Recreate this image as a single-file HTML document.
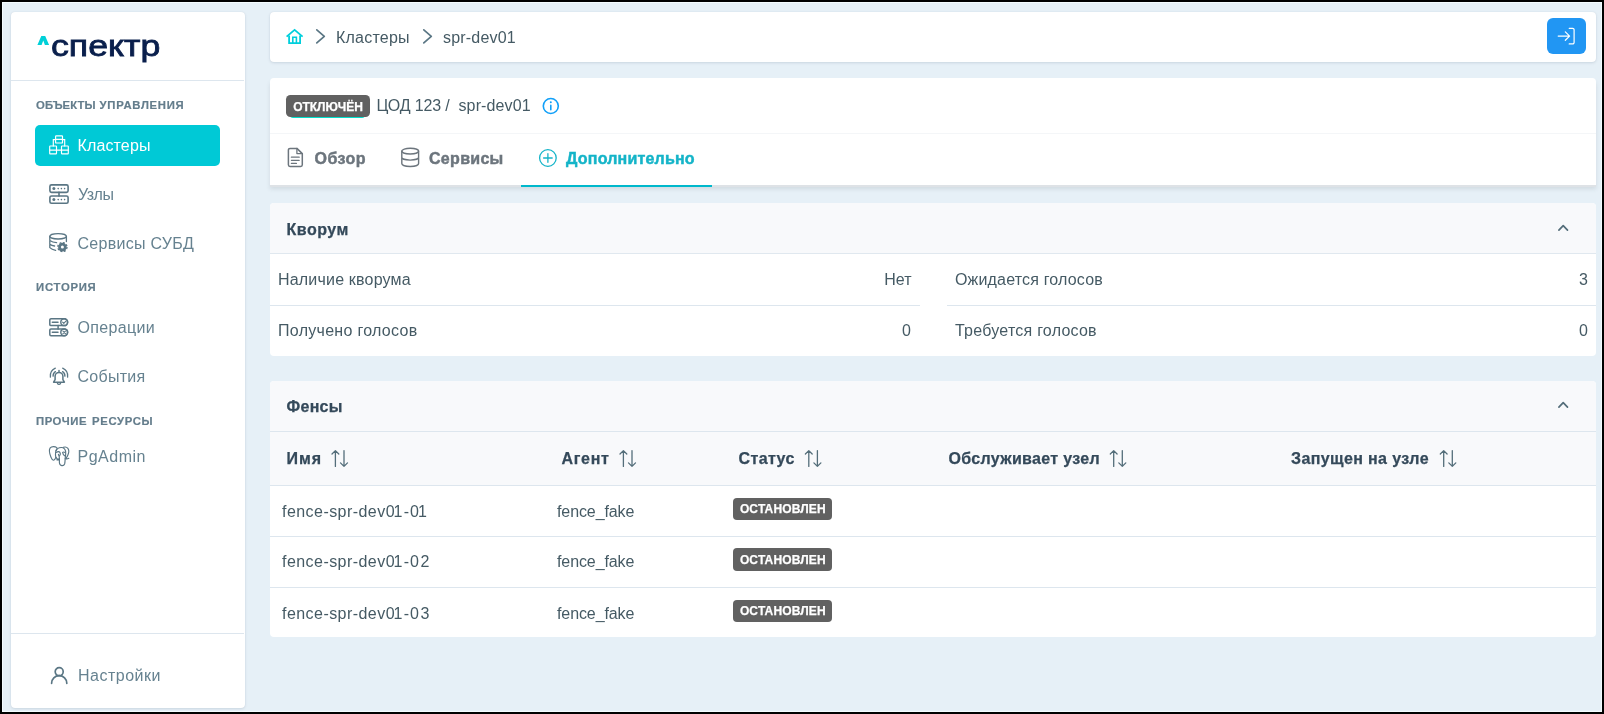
<!DOCTYPE html>
<html lang="ru">
<head>
<meta charset="utf-8">
<title>Спектр — Кластеры — spr-dev01</title>
<style>
*{box-sizing:border-box;margin:0;padding:0}
html,body{width:1604px;height:714px;overflow:hidden;background:#000}
body{font-family:"Liberation Sans",sans-serif;font-size:16px;color:#455a64;position:relative}
.frame{position:absolute;left:2px;top:2px;width:1600px;height:710px;background:#e6f0f7;border:1px solid #f4fcff;overflow:hidden}
#app{position:absolute;left:0;top:0;width:1604px;height:714px;will-change:transform}
.abs{position:absolute;white-space:nowrap;line-height:1}
.card{position:absolute;background:#fff;border-radius:4px;box-shadow:0 1px 3px rgba(70,90,110,.16),0 0 1px rgba(70,90,110,.12)}
.panel{position:absolute;background:#fff;border-radius:4px;overflow:hidden}
.hr{position:absolute;height:1px;background:#dde6ee}
.lbl{font-size:11.3px;font-weight:bold;color:#647d8c;-webkit-text-stroke:.2px #647d8c}
.nav{color:#668290;font-size:16px}
.active{position:absolute;left:35px;top:125px;width:185px;height:41px;border-radius:5px;background:#00c9d6}
svg{position:absolute;overflow:visible}
.ic{fill:none;stroke:#5a7684;stroke-width:1.5;stroke-linecap:round;stroke-linejoin:round}
.t{color:#455a64}
.b{font-weight:bold;color:#34495a;-webkit-text-stroke:.25px currentColor}
.tab{font-weight:bold;color:#6c757d;-webkit-text-stroke:.45px currentColor}
.phead{position:absolute;left:0;top:0;right:0;background:#f8f9fb}
.badge{position:absolute;letter-spacing:.2px;-webkit-text-stroke:.25px #fff;background:#616161;color:#fff;font-weight:bold;font-size:12px;border-radius:4px;text-align:center;white-space:nowrap}
</style>
</head>
<body>
<div id="app">
<div class="frame"></div>

<!-- SIDEBAR -->
<div class="card" style="left:10.8px;top:11.6px;width:233.8px;height:696px"></div>
<div class="abs" id="logo" style="left:50.7px;top:30.6px;font-size:30px;color:#0a1f4c;letter-spacing:0;-webkit-text-stroke:0.8px #0a1f4c;transform:scaleX(1.19);transform-origin:0 0">спектр</div>
<svg style="left:0;top:0" width="60" height="60" viewBox="0 0 60 60"><path d="M37.4 45L41.3 36H45.2L49.1 45H44.9L43.25 40.4L41.6 45Z" fill="#00d0d8"/></svg>
<div class="hr" style="left:11px;top:80px;width:233.3px"></div>

<div class="abs lbl" style="left:36px;top:100px;letter-spacing:.1px">ОБЪЕКТЫ</div>
<div class="abs lbl" style="left:99.6px;top:100px;letter-spacing:.72px">УПРАВЛЕНИЯ</div>
<div class="active"></div>
<div class="abs nav" style="left:77.5px;top:138px;color:#fff;letter-spacing:0.13px">Кластеры</div>
<div class="abs nav" style="left:78px;top:187px;letter-spacing:-0.4px">Узлы</div>
<div class="abs nav" style="left:77.5px;top:236px;letter-spacing:0.29px">Сервисы СУБД</div>
<div class="abs lbl" style="left:36px;top:282px;letter-spacing:.76px">ИСТОРИЯ</div>
<div class="abs nav" style="left:77.5px;top:320px;letter-spacing:0.35px">Операции</div>
<div class="abs nav" style="left:77.5px;top:369px;letter-spacing:0.28px">События</div>
<div class="abs lbl" style="left:36px;top:416px;letter-spacing:.52px">ПРОЧИЕ</div>
<div class="abs lbl" style="left:92px;top:416px;letter-spacing:.66px">РЕСУРСЫ</div>
<div class="abs nav" style="left:77.5px;top:449px;letter-spacing:0.5px">PgAdmin</div>
<div class="hr" style="left:11px;top:633px;width:233.3px"></div>
<div class="abs nav" style="left:78px;top:668px;letter-spacing:0.5px">Настройки</div>

<!-- sidebar icons -->
<svg style="left:49px;top:135.2px" width="20" height="20" viewBox="0 0 20 20" class="ic"><g stroke="#fff" stroke-width="1.15" stroke-linejoin="miter">
<rect x="6.6" y="0.9" width="6.9" height="7.1" rx=".6"/><path d="M6.6 4.4H13.5M6.6 4.6H4.3V11M13.5 4.6H15.7V11"/>
<rect x="0.7" y="11" width="6.8" height="7.9" rx=".6"/><rect x="12.5" y="11" width="6.8" height="7.9" rx=".6"/><path d="M0.7 15.1H19.3"/></g></svg>

<svg style="left:49px;top:184px" width="20" height="20" viewBox="0 0 20 20" class="ic"><g stroke-width="1.6">
<rect x="0.9" y="0.9" width="18.2" height="7.5" rx="1.6"/><rect x="0.9" y="12" width="18.2" height="7.3" rx="1.6"/><path d="M10 8.4V12"/></g>
<g fill="#5a7684" stroke="none"><circle cx="4.9" cy="4.6" r="1.5"/><circle cx="9.2" cy="4.6" r=".8"/><circle cx="12.4" cy="4.6" r=".8"/><circle cx="15.6" cy="4.6" r=".8"/>
<circle cx="4.9" cy="15.6" r="1.5"/><circle cx="9.2" cy="15.6" r=".8"/><circle cx="12.4" cy="15.6" r=".8"/><circle cx="15.6" cy="15.6" r=".8"/></g></svg>

<svg style="left:49px;top:233px" width="20" height="20" viewBox="0 0 20 20" class="ic"><g stroke-width="1.3">
<ellipse cx="9.1" cy="3.3" rx="8.3" ry="2.7"/><path d="M0.8 3.3V14.6M17.4 3.3V8.6M0.8 7.6Q3.5 9.6 7.6 9.7M0.8 11.2Q2.6 12.7 5.6 13M0.8 14.6Q2.8 16.6 6.6 17.3"/></g>
<circle cx="13.4" cy="14.1" r="4.3" fill="#5a7684" stroke="none"/><circle cx="13.4" cy="14.1" r="4.6" stroke-width="1.3" stroke-dasharray="1.9 1.713" stroke-linecap="butt"/><circle cx="13.4" cy="14.1" r="1.5" fill="#fff" stroke="none"/></svg>

<svg style="left:49px;top:318px" width="20" height="20" viewBox="0 0 20 20" class="ic"><g stroke-width="1.5">
<path d="M2 0.8H15.2a3.4 3.4 0 0 1 0 6.8H2A1.2 1.2 0 0 1 .8 6.4V2A1.2 1.2 0 0 1 2 .8Z"/><circle cx="15.2" cy="4.2" r="3.4"/><path d="M3.3 4.2H9"/>
<path d="M2 10.9H15.2a3.4 3.4 0 0 1 0 6.8H2a1.2 1.2 0 0 1-1.2-1.2V12.1a1.2 1.2 0 0 1 1.2-1.2Z"/><circle cx="15.2" cy="14.3" r="3.4"/><path d="M3.3 14.3H9M9.1 7.6V10.9"/></g>
<g stroke-width="1.1"><path d="M13.6 4.1L14.8 5.3L16.9 3.2M14 13.1L16.4 15.5M16.4 13.1L14 15.5"/></g></svg>

<svg style="left:49px;top:367px" width="20" height="20" viewBox="0 0 20 20" class="ic"><g stroke-width="1.5">
<path d="M10 3.4V4.8M4.6 15.2L6.1 12.6V9.3a3.9 3.9 0 0 1 7.8 0V12.6L15.4 15.2Z"/><path d="M8.4 16.2a1.7 1.7 0 0 0 3.2 0" stroke-width="1.2"/>
<path d="M6.4 4.6Q3.9 6.2 4.1 9.2M13.6 4.6Q16.1 6.2 15.9 9.2M6.3 1.2Q.6 3.8 1.4 10.2M13.7 1.2Q19.4 3.8 18.6 10.2" stroke-width="1.3"/></g></svg>

<svg style="left:49px;top:446px" width="20" height="20" viewBox="0 0 20 20" class="ic"><g stroke-width="1.15">
<path d="M7.9 1.6C6 .3 2.6.2 1.2 1.9C-.2 3.8.9 8.6 2 11.2C2.7 12.9 3.6 14.3 4.5 14.2C5.6 14 6.4 12.6 6.8 11.3C6.3 8.6 6.4 5 7.9 2.6"/>
<path d="M7 4.8C8 2.4 10.3 1.4 12.6 1.5C14.6 1.6 16.1 2.9 16.6 5.2C17 7.4 16.6 10 16.2 12.3C16 14.6 16.1 16.6 15.6 18C15.1 19.3 13.9 19.8 12.7 19.6C11.2 19.4 10.5 18.2 10.4 16.8V12.6C10.4 11 10.2 9.6 9.4 8.4"/>
<path d="M14.4 1.3C16 .8 17.9 1.1 18.9 2.4C20.1 4 19.9 6.6 19 8.8C18.6 10 18 11.1 17.3 11.9M16.2 12.7C17.4 13.1 18.8 12.9 19.8 12.3"/>
<path d="M7.6 6.4C8.6 5.4 10.2 5.4 10.9 6.3C11.6 7.3 11.4 8.8 10.6 9.8M13.6 6.4C14.2 5.8 15.2 5.8 15.8 6.4M13.7 6.6C13.9 8 14.6 9.2 15.7 9.8M7.2 11.4C7.4 12.4 8.4 13.4 10.2 13.4"/></g>
<path d="M7.4 13.2L10 12.4L10.2 14.4L7.6 14.6Z" fill="#5a7684" stroke="none"/></svg>

<svg style="left:49px;top:665px" width="20" height="20" viewBox="0 0 20 20" class="ic"><g stroke-width="1.7"><circle cx="10.2" cy="6.7" r="4"/><path d="M2.6 18.3a7.6 7.6 0 0 1 15.2 0"/></g></svg>

<!-- TOP BAR -->
<div class="card" style="left:270px;top:11.5px;width:1326px;height:50px"></div>
<svg style="left:286px;top:28px" width="18" height="17" viewBox="0 0 18 17" fill="none" stroke="#00cfdc" stroke-width="1.8" stroke-linejoin="miter" stroke-linecap="butt"><path d="M0.6 8.6L8.6 1.9L16.6 8.6"/><path d="M3.1 7.6V15.1H14.1V7.6"/><path d="M6.8 15.1V9.3H10.4V15.1" stroke-width="1.6"/></svg>
<svg style="left:315px;top:28px" width="12" height="17" viewBox="0 0 12 17" class="ic"><path d="M1.8 1.9L9.3 8.4L1.8 14.9" stroke-width="1.7"/></svg>
<div class="abs t" style="left:336px;top:30px;letter-spacing:0.22px">Кластеры</div>
<svg style="left:421.8px;top:28px" width="12" height="17" viewBox="0 0 12 17" class="ic"><path d="M1.8 1.9L9.3 8.4L1.8 14.9" stroke-width="1.7"/></svg>
<div class="abs t" style="left:443px;top:30px;letter-spacing:0.2px">spr-dev01</div>
<div style="position:absolute;left:1546.5px;top:18px;width:39.5px;height:36px;border-radius:6px;background:#2196f3"></div>
<svg style="left:1556px;top:26px" width="20" height="20" viewBox="0 0 20 20" fill="none" stroke="#fff" stroke-width="1.2" stroke-linecap="round" stroke-linejoin="round"><path d="M2.2 10.1H13.4M9.3 5.9L13.6 10.1L9.3 14.3M13.2 2.3H16.6a1.5 1.5 0 0 1 1.5 1.5V16.4a1.5 1.5 0 0 1-1.5 1.5H13.2"/></svg>

<!-- HEADER CARD -->
<div class="card" style="left:270px;top:78px;width:1326px;height:107px;border-radius:4px 4px 0 0;box-shadow:0 4px 4px rgba(60,70,80,.13)"></div>
<div class="hr" style="left:270px;top:185px;width:1326px;height:2px;background:#dee2e6"></div>
<div class="hr" style="left:270px;top:133px;width:1326px;background:#f4f6f8"></div>
<div style="position:absolute;left:290px;top:115px;width:75px;height:3px;border-radius:0 0 3px 3px;background:#00e0cc"></div>
<div class="badge" style="left:286px;top:95px;width:84px;height:22.3px;line-height:24px;border-radius:4.5px;letter-spacing:0">ОТКЛЮЧЁН</div>
<div class="abs t" style="left:376.5px;top:98px;letter-spacing:-0.17px">ЦОД 123 /</div>
<div class="abs t" style="left:458.5px;top:98px;letter-spacing:0.12px">spr-dev01</div>
<svg style="left:541px;top:96px" width="20" height="20" viewBox="0 0 20 20" fill="none" stroke="#12a0f8" stroke-width="1.6" stroke-linecap="round"><circle cx="9.8" cy="10" r="7.5"/><path d="M9.8 9.4V13.7" stroke-width="1.6"/><circle cx="9.8" cy="6.3" r="1" fill="#12a0f8" stroke="none"/></svg>

<svg style="left:287px;top:147px" width="17" height="21" viewBox="0 0 17 21" fill="none" stroke="#6c757d" stroke-width="1.5" stroke-linecap="round" stroke-linejoin="round"><path d="M3 1.4H9.9L15.3 6.6V17.8A1.6 1.6 0 0 1 13.7 19.4H3A1.6 1.6 0 0 1 1.4 17.8V3A1.6 1.6 0 0 1 3 1.4Z"/><path d="M9.9 1.4V6.6H15.3M4.4 10.2H12.2M4.4 13.3H12.2M4.4 16.4H9.4" stroke-width="1.3"/></svg>
<div class="abs tab" style="left:314.5px;top:151px;letter-spacing:0.45px">Обзор</div>
<svg style="left:400px;top:147.1px" width="20" height="21" viewBox="0 0 20 21" fill="none" stroke="#6c757d" stroke-width="1.4" stroke-linecap="round"><ellipse cx="10.2" cy="4.1" rx="8.4" ry="2.9"/><path d="M1.8 4.1V16.6C1.8 18.2 5.6 19.5 10.2 19.5S18.6 18.2 18.6 16.6V4.1M1.8 10.2C1.8 11.8 5.6 13.1 10.2 13.1S18.6 11.8 18.6 10.2"/></svg>
<div class="abs tab" style="left:429px;top:151px;letter-spacing:0.3px">Сервисы</div>
<svg style="left:538px;top:148px" width="20" height="20" viewBox="0 0 20 20" fill="none" stroke="#14b4c8" stroke-width="1.3" stroke-linecap="round"><circle cx="9.9" cy="10" r="8.3"/><path d="M5.6 10H14.2M9.9 5.7V14.3"/></svg>
<div class="abs tab" style="left:566px;top:151px;color:#14b4c8;letter-spacing:0.2px">Дополнительно</div>
<div style="position:absolute;left:521px;top:185px;width:191.3px;height:2px;background:#00b8cc"></div>

<!-- QUORUM -->
<div class="panel" style="left:270px;top:203.2px;width:1326px;height:152.8px">
  <div class="phead" style="height:50px"></div>
  <div class="hr" style="left:0;top:49.7px;width:1326px;height:1.6px;background:#e0e8ef"></div>
</div>
<div class="abs b" style="left:286.5px;top:222px;letter-spacing:0.5px">Кворум</div>
<svg style="left:1556px;top:222px" width="14" height="11" viewBox="0 0 14 11" class="ic"><path d="M2.9 8.1L7.2 3.6L11.5 8.1" stroke-width="1.7" stroke="#546e7a"/></svg>
<div class="abs t" style="left:278px;top:272px;letter-spacing:0.19px">Наличие кворума</div>
<div class="abs t" style="right:692.5px;top:272px">Нет</div>
<div class="abs t" style="left:278px;top:323px;letter-spacing:0.29px">Получено голосов</div>
<div class="abs t" style="right:693px;top:323px">0</div>
<div class="hr" style="left:270px;top:305px;width:650px"></div>
<div class="abs t" style="left:955px;top:272px;letter-spacing:0.175px">Ожидается голосов</div>
<div class="abs t" style="right:16px;top:272px">3</div>
<div class="abs t" style="left:955px;top:323px;letter-spacing:0.24px">Требуется голосов</div>
<div class="abs t" style="right:16px;top:323px">0</div>
<div class="hr" style="left:947px;top:305px;width:649px"></div>

<!-- FENCES -->
<div class="panel" style="left:270px;top:381px;width:1326px;height:256.4px">
  <div class="phead" style="height:105px"></div>
  <div class="hr" style="left:0;top:50px;width:1326px"></div>
  <div class="hr" style="left:0;top:104px;width:1326px"></div>
  <div class="hr" style="left:0;top:155px;width:1326px"></div>
  <div class="hr" style="left:0;top:206px;width:1326px"></div>
</div>
<div class="abs b" style="left:286.5px;top:399px;letter-spacing:0.3px">Фенсы</div>
<svg style="left:1556px;top:399.4px" width="14" height="11" viewBox="0 0 14 11" class="ic"><path d="M2.9 8.1L7.2 3.6L11.5 8.1" stroke-width="1.7" stroke="#546e7a"/></svg>
<div class="abs b" style="left:286.5px;top:451px;letter-spacing:1.0px">Имя</div>
<div class="abs b" style="left:561.5px;top:451px;letter-spacing:0.67px">Агент</div>
<div class="abs b" style="left:738.5px;top:451px;letter-spacing:0.38px">Статус</div>
<div class="abs b" style="left:948.5px;top:451px;letter-spacing:0.33px">Обслуживает узел</div>
<div class="abs b" style="left:1291px;top:451px;letter-spacing:0.38px">Запущен на узле</div>
<svg style="left:0;top:0" width="1604" height="714" viewBox="0 0 1604 714" fill="none" stroke="#546e7a" stroke-width="1.3" stroke-linecap="round" stroke-linejoin="round">
<path transform="translate(331.3 449.8)" d="M4.1 16.6V0.9M0.7 4.2L4.1 0.8L7.5 4.2M12.7 0.8V16.5M9.2 13.1L12.7 16.6L16.2 13.1"/><path transform="translate(619.3 449.8)" d="M4.1 16.6V0.9M0.7 4.2L4.1 0.8L7.5 4.2M12.7 0.8V16.5M9.2 13.1L12.7 16.6L16.2 13.1"/><path transform="translate(804.7 449.8)" d="M4.1 16.6V0.9M0.7 4.2L4.1 0.8L7.5 4.2M12.7 0.8V16.5M9.2 13.1L12.7 16.6L16.2 13.1"/><path transform="translate(1109.6 449.8)" d="M4.1 16.6V0.9M0.7 4.2L4.1 0.8L7.5 4.2M12.7 0.8V16.5M9.2 13.1L12.7 16.6L16.2 13.1"/><path transform="translate(1439.6 449.8)" d="M4.1 16.6V0.9M0.7 4.2L4.1 0.8L7.5 4.2M12.7 0.8V16.5M9.2 13.1L12.7 16.6L16.2 13.1"/>
</svg>

<div class="abs t" style="left:282px;top:504px"><span style="letter-spacing:.45px">fence-spr-dev0</span><span style="margin-left:-1.5px;margin-right:1.25px">1</span><span style="letter-spacing:1.05px">-</span><span style="letter-spacing:1.6px">0</span><span style="margin-left:-2.6px">1</span></div>
<div class="abs t" style="left:557px;top:504px;letter-spacing:-0.1px">fence_fake</div>
<div class="badge" style="left:733.2px;top:497.8px;width:99.3px;height:22px;line-height:23.4px;letter-spacing:.15px">ОСТАНОВЛЕН</div>
<div class="abs t" style="left:282px;top:554px"><span style="letter-spacing:.45px">fence-spr-dev0</span><span style="margin-left:-1.5px;margin-right:1.25px">1</span><span style="letter-spacing:1.05px">-</span><span style="letter-spacing:1.6px">0</span>2</div>
<div class="abs t" style="left:557px;top:554px;letter-spacing:-0.1px">fence_fake</div>
<div class="badge" style="left:733.2px;top:548.2px;width:99.3px;height:22.5px;line-height:24px;letter-spacing:.15px">ОСТАНОВЛЕН</div>
<div class="abs t" style="left:282px;top:606px"><span style="letter-spacing:.45px">fence-spr-dev0</span><span style="margin-left:-1.5px;margin-right:1.25px">1</span><span style="letter-spacing:1.05px">-</span><span style="letter-spacing:1.6px">0</span>3</div>
<div class="abs t" style="left:557px;top:606px;letter-spacing:-0.1px">fence_fake</div>
<div class="badge" style="left:733.2px;top:599.8px;width:99.3px;height:22px;line-height:23.4px;letter-spacing:.15px">ОСТАНОВЛЕН</div>
</div>
</body>
</html>
